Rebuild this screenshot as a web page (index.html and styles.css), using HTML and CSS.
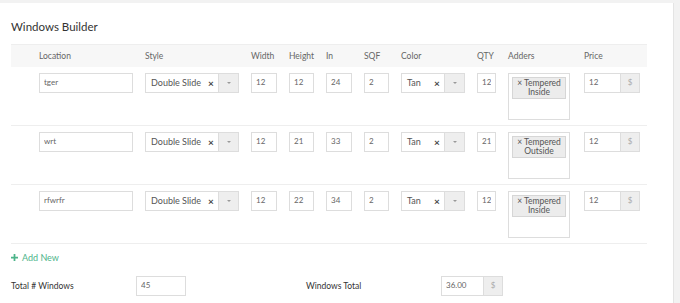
FILE: index.html
```html
<!DOCTYPE html>
<html lang="en">
<head>
    <meta charset="UTF-8">
    <meta name="viewport" content="width=device-width, initial-scale=1.0">
    <title>Windows Builder</title>
    <link rel="stylesheet" href="styles.css">
</head>
<body>
    <div class="panel">
        <h2 class="title">Windows Builder</h2>

        <div class="builder">
            <div class="grid-row head">
                <span>Location</span>
                <span>Style</span>
                <span>Width</span>
                <span>Height</span>
                <span>In</span>
                <span>SQF</span>
                <span>Color</span>
                <span>QTY</span>
                <span>Adders</span>
                <span class="price-col">Price</span>
            </div>

            <div class="grid-row">
                <input class="field" type="text" value="tger">
                <div class="select">
                    <span class="select-value">Double Slide</span>
                    <span class="select-clear">&times;</span>
                    <span class="select-arrow"></span>
                </div>
                <input class="field" type="text" value="12">
                <input class="field" type="text" value="12">
                <input class="field" type="text" value="24">
                <input class="field" type="text" value="2">
                <div class="select">
                    <span class="select-value">Tan</span>
                    <span class="select-clear">&times;</span>
                    <span class="select-arrow"></span>
                </div>
                <input class="field" type="text" value="12">
                <div class="tags">
                    <span class="tag">&times; Tempered<br>Inside</span>
                </div>
                <div class="addon-group price-col">
                    <input class="field" type="text" value="12">
                    <span class="addon">$</span>
                </div>
            </div>

            <div class="grid-row">
                <input class="field" type="text" value="wrt">
                <div class="select">
                    <span class="select-value">Double Slide</span>
                    <span class="select-clear">&times;</span>
                    <span class="select-arrow"></span>
                </div>
                <input class="field" type="text" value="12">
                <input class="field" type="text" value="21">
                <input class="field" type="text" value="33">
                <input class="field" type="text" value="2">
                <div class="select">
                    <span class="select-value">Tan</span>
                    <span class="select-clear">&times;</span>
                    <span class="select-arrow"></span>
                </div>
                <input class="field" type="text" value="21">
                <div class="tags">
                    <span class="tag">&times; Tempered<br>Outside</span>
                </div>
                <div class="addon-group price-col">
                    <input class="field" type="text" value="12">
                    <span class="addon">$</span>
                </div>
            </div>

            <div class="grid-row">
                <input class="field" type="text" value="rfwrfr">
                <div class="select">
                    <span class="select-value">Double Slide</span>
                    <span class="select-clear">&times;</span>
                    <span class="select-arrow"></span>
                </div>
                <input class="field" type="text" value="12">
                <input class="field" type="text" value="22">
                <input class="field" type="text" value="34">
                <input class="field" type="text" value="2">
                <div class="select">
                    <span class="select-value">Tan</span>
                    <span class="select-clear">&times;</span>
                    <span class="select-arrow"></span>
                </div>
                <input class="field" type="text" value="12">
                <div class="tags">
                    <span class="tag">&times; Tempered<br>Inside</span>
                </div>
                <div class="addon-group price-col">
                    <input class="field" type="text" value="12">
                    <span class="addon">$</span>
                </div>
            </div>
        </div>

        <a class="add-new" href="#">
            <svg width="7" height="7" viewBox="0 0 8 8"><path d="M4 0v8M0 4h8" stroke="currentColor" stroke-width="2"/></svg>
            Add New
        </a>

        <div class="totals">
            <label class="total-label">Total # Windows</label>
            <input class="field total-count" type="text" value="45">
            <label class="total-label second">Windows Total</label>
            <div class="addon-group">
                <input class="field total-sum" type="text" value="36.00">
                <span class="addon">$</span>
            </div>
        </div>
    </div>
</body>
</html>
```

FILE: styles.css
```css
body {
    margin: 0;
    background-color: #f2f2f2;
    font-family: Lato, "Open Sans", sans-serif;
    color: #333;
}

.panel {
    margin-top: 3px;
    width: 674px;
    height: 300px;
    background: #fff;
    border-right: 1px solid #e4e4e4;
    padding: 0 11px;
    box-sizing: border-box;
}

.title {
    margin: 0;
    padding-top: 17px;
    height: 24px;
    font-size: 11.5px;
    font-weight: normal;
    color: #333;
}

.builder {
    width: 636px;
    border-top: 1px solid #eee;
}

.grid-row {
    display: grid;
    grid-template-columns: 94px 94px 26px 25px 26px 25px 64px 19px 62px 58px;
    column-gap: 12px;
    align-items: start;
    padding: 6px 0 5px 28px;
    border-bottom: 1px solid #eee;
}

.grid-row.head {
    background: #f7f7f7;
    padding: 0 0 0 28px;
    height: 22px;
    align-items: center;
    font-size: 8.5px;
    color: #666;
    border-bottom: none;
}

.price-col {
    margin-left: 2px;
}

.field {
    box-sizing: border-box;
    width: 100%;
    height: 20px;
    margin: 0;
    padding: 0 4px 3px;
    border: 1px solid #ddd;
    font-family: inherit;
    font-size: 8px;
    color: #666;
    background: #fff;
    outline: none;
}

.select {
    display: flex;
    align-items: center;
    height: 20px;
    border: 1px solid #ddd;
    box-sizing: border-box;
    font-size: 9px;
    color: #555;
    white-space: nowrap;
}

.select-value {
    flex: 1;
    padding-left: 5px;
    padding-bottom: 1px;
}

.select-clear {
    width: 10px;
    font-size: 10px;
    font-weight: bold;
    color: #444;
}

.select-arrow {
    width: 19px;
    align-self: stretch;
    background: #eee;
    border-left: 1px solid #ddd;
    position: relative;
}

.select-arrow::after {
    content: "";
    position: absolute;
    left: 8px;
    top: 8px;
    border-left: 2px solid transparent;
    border-right: 2px solid transparent;
    border-top: 2px solid #999;
}

.tags {
    box-sizing: border-box;
    height: 47px;
    border: 1px solid #ddd;
    padding: 3px;
}

.tag {
    display: block;
    box-sizing: border-box;
    height: 22px;
    background: #ececec;
    border: 1px solid #d6d6d6;
    text-align: center;
    font-size: 8.5px;
    line-height: 9px;
    padding-top: 1px;
    color: #555;
}

.addon-group {
    display: flex;
}

.addon-group .field {
    flex: 1;
    width: auto;
    min-width: 0;
}

.addon {
    box-sizing: border-box;
    width: 19px;
    height: 20px;
    background: #eee;
    border: 1px solid #ddd;
    border-left: none;
    font-size: 8px;
    color: #aaa;
    text-align: center;
    line-height: 17px;
}

.add-new {
    display: flex;
    align-items: center;
    gap: 4px;
    margin-top: 7px;
    height: 12px;
    font-size: 9px;
    color: #4db48a;
    text-decoration: none;
}

.totals {
    display: flex;
    align-items: center;
    margin-top: 13px;
}

.total-label {
    width: 125px;
    font-size: 8.5px;
    color: #333;
}

.total-label.second {
    width: 135px;
    margin-left: 120px;
}

.total-count {
    width: 50px;
}

.totals .addon-group {
    width: 62px;
}
```
